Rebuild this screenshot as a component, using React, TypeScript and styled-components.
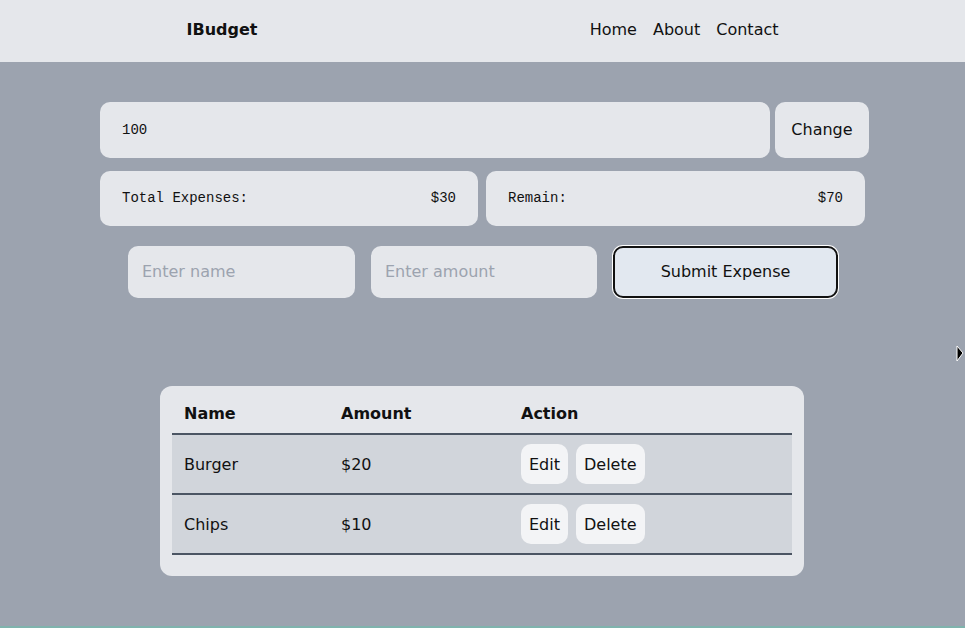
import React from "react";
import styled, { createGlobalStyle } from "styled-components";

const Global = createGlobalStyle`
  html, body { margin: 0; padding: 0; }
  body {
    background: #7fb3ad;
    font-family: "DejaVu Sans", sans-serif;
    color: #111;
  }
  * { box-sizing: border-box; }
`;

const Header = styled.header`
  height: 62px;
  background: #e5e7eb;
  padding-top: 20px;
`;

const HeaderInner = styled.div`
  width: 592px;
  margin: 0 auto;
  display: flex;
  justify-content: space-between;
  align-items: flex-start;
`;

const Logo = styled.div`
  font-weight: bold;
  font-size: 16px;
`;

const Nav = styled.nav`
  display: flex;
  gap: 16px;
  font-size: 16px;
`;

const NavLink = styled.a`
  color: #111;
  text-decoration: none;
`;

const Main = styled.main`
  position: relative;
  height: 564px;
  background: #9ca3af;
  padding-top: 40px;
`;

const Content = styled.div`
  width: 770px;
  margin-left: 100px;
  display: flex;
  flex-direction: column;
  align-items: flex-start;
`;

const BudgetRow = styled.div`
  display: flex;
  gap: 5px;
  width: 769px;
`;

const MonoBox = styled.div`
  height: 56px;
  background: #e5e7eb;
  border-radius: 10px;
  padding: 0 22px;
  display: flex;
  align-items: center;
  justify-content: space-between;
  font-family: "Liberation Mono", monospace;
  font-size: 14px;
`;

const BudgetInput = styled(MonoBox)`
  flex: 1;
  padding-bottom: 1px;
`;

const ChangeButton = styled.button`
  width: 94px;
  height: 56px;
  border: none;
  border-radius: 10px;
  background: #e5e7eb;
  font-family: "DejaVu Sans", sans-serif;
  font-size: 16px;
  color: #111;
  padding: 0 0 2px;
`;

const StatsRow = styled.div`
  display: flex;
  gap: 8px;
  margin-top: 13px;
`;

const StatCard = styled(MonoBox)<{ $w: number }>`
  width: ${(p) => p.$w}px;
  height: 55px;
  padding-bottom: 2px;
`;

const FormRow = styled.div`
  display: grid;
  grid-template-columns: 227px 226px 225px;
  column-gap: 16px;
  margin-top: 20px;
  margin-left: 28px;
`;

const TextInput = styled.input`
  height: 52px;
  border: none;
  border-radius: 10px;
  background: #e5e7eb;
  padding: 0 14px 2px;
  font-family: "DejaVu Sans", sans-serif;
  font-size: 16px;
  color: #111;
  outline: none;
  &::placeholder { color: #9ca3af; }
`;

const SubmitButton = styled.button`
  height: 52px;
  border: 2px solid #111;
  border-radius: 10px;
  background: #e2e8f0;
  box-shadow: 0 0 0 1px #fff;
  font-family: "DejaVu Sans", sans-serif;
  font-size: 16px;
  color: #111;
  padding: 0 0 2px;
`;

const TableCard = styled.div`
  width: 644px;
  height: 190px;
  margin-top: 88px;
  margin-left: 60px;
  background: #e5e7eb;
  border-radius: 12px;
  padding: 6px 12px 0;
`;

const Table = styled.table`
  width: 100%;
  border-collapse: collapse;
  font-size: 16px;
`;

const Th = styled.th<{ $w?: number }>`
  text-align: left;
  font-weight: bold;
  padding: 12px 12px 10px;
  width: ${(p) => (p.$w ? `${p.$w}px` : "auto")};
  border-bottom: 2px solid #4b5563;
`;

const Tr = styled.tr`
  background: #d1d5db;
  border-bottom: 2px solid #4b5563;
`;

const Td = styled.td`
  padding: 9px 12px;
  height: 58px;
`;

const Actions = styled.div`
  display: flex;
  gap: 8px;
`;

const SmallButton = styled.button`
  height: 40px;
  padding: 0 8px;
  border: none;
  border-radius: 10px;
  background: #f3f4f6;
  font-family: "DejaVu Sans", sans-serif;
  font-size: 16px;
  color: #111;
`;

const Cursor = styled.svg`
  position: absolute;
  left: 955px;
  top: 282px;
`;

const expenses = [
  { name: "Burger", amount: 20 },
  { name: "Chips", amount: 10 },
];

export default function App() {
  return (
    <>
      <Global />
      <Header>
        <HeaderInner>
          <Logo>IBudget</Logo>
          <Nav>
            <NavLink href="#">Home</NavLink>
            <NavLink href="#">About</NavLink>
            <NavLink href="#">Contact</NavLink>
          </Nav>
        </HeaderInner>
      </Header>
      <Main>
        <Content>
          <BudgetRow>
            <BudgetInput>100</BudgetInput>
            <ChangeButton>Change</ChangeButton>
          </BudgetRow>
          <StatsRow>
            <StatCard $w={378}>
              <span>Total Expenses:</span>
              <span>$30</span>
            </StatCard>
            <StatCard $w={379}>
              <span>Remain:</span>
              <span>$70</span>
            </StatCard>
          </StatsRow>
          <FormRow>
            <TextInput placeholder="Enter name" />
            <TextInput placeholder="Enter amount" />
            <SubmitButton>Submit Expense</SubmitButton>
          </FormRow>
          <TableCard>
            <Table>
              <thead>
                <tr>
                  <Th $w={157}>Name</Th>
                  <Th $w={180}>Amount</Th>
                  <Th>Action</Th>
                </tr>
              </thead>
              <tbody>
                {expenses.map((e) => (
                  <Tr key={e.name}>
                    <Td>{e.name}</Td>
                    <Td>${e.amount}</Td>
                    <Td>
                      <Actions>
                        <SmallButton>Edit</SmallButton>
                        <SmallButton>Delete</SmallButton>
                      </Actions>
                    </Td>
                  </Tr>
                ))}
              </tbody>
            </Table>
          </TableCard>
        </Content>
        <Cursor width="10" height="20" viewBox="0 0 10 20">
          <polygon points="2,2 8,9 2,17" fill="#000" stroke="#fff" strokeWidth="1" />
        </Cursor>
      </Main>
    </>
  );
}
